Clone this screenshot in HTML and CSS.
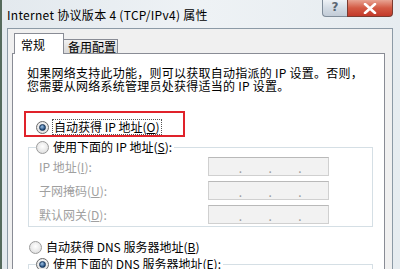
FILE: index.html
```html
<!DOCTYPE html>
<html lang="zh-CN">
<head>
<meta charset="utf-8">
<title>Internet 协议版本 4 (TCP/IPv4) 属性</title>
<link rel="stylesheet" href="styles.css">
</head>
<body>
<div class="window">
  <div class="titlebar">
    <span class="title">Internet 协议版本 4 (TCP/IPv4) 属性</span>
    <div class="caption-btns">
      <div class="btn-help">?</div>
      <div class="btn-close">
        <svg width="14" height="11" viewBox="0 0 14 11"><path d="M2 1 L12 10 M12 1 L2 10" stroke="#fff" stroke-width="2.6" stroke-linecap="round"/></svg>
      </div>
    </div>
  </div>
  <div class="client">
    <div class="tabs">
      <div class="tab active">常规</div>
      <div class="tab">备用配置</div>
    </div>
    <div class="panel">
      <p class="desc">如果网络支持此功能，则可以获取自动指派的 IP 设置。否则，<br>您需要从网络系统管理员处获得适当的 IP 设置。</p>
      <div class="highlight">
        <div class="radio-row"><span class="radio checked"></span><span class="focus">自动获得 IP 地址(<u>O</u>)</span></div>
      </div>
      <fieldset class="group">
        <legend><div class="radio-row"><span class="radio"></span><span>使用下面的 IP 地址(<u>S</u>):</span></div></legend>
        <div class="field-row"><span class="label">IP 地址(<u>I</u>):</span><div class="ipbox"><span></span><i>.</i><span></span><i>.</i><span></span><i>.</i><span></span></div></div>
        <div class="field-row"><span class="label">子网掩码(<u>U</u>):</span><div class="ipbox"><span></span><i>.</i><span></span><i>.</i><span></span><i>.</i><span></span></div></div>
        <div class="field-row"><span class="label">默认网关(<u>D</u>):</span><div class="ipbox"><span></span><i>.</i><span></span><i>.</i><span></span><i>.</i><span></span></div></div>
      </fieldset>
      <div class="radio-row dns-auto"><span class="radio"></span><span>自动获得 DNS 服务器地址(<u>B</u>)</span></div>
      <fieldset class="group group2">
        <legend><div class="radio-row"><span class="radio checked"></span><span>使用下面的 DNS 服务器地址(<u>E</u>):</span></div></legend>
      </fieldset>
    </div>
  </div>
</div>
</body>
</html>
```
FILE: styles.css
```css
html, body {
  margin: 0;
  padding: 0;
}
body {
  width: 400px;
  height: 269px;
  overflow: hidden;
  font-family: "Noto Sans CJK SC", "DejaVu Sans", sans-serif;
  font-size: 12px;
  color: #000;
}
.window {
  height: 269px;
  display: flex;
  flex-direction: column;
  background: linear-gradient(to right, #e3e9ee, #eef2f5 50%, #e6ecf0);
  border-left: 2px solid #556a5c;
  box-sizing: border-box;
  overflow: hidden;
}
.titlebar {
  height: 28px;
  flex: none;
  display: flex;
  align-items: flex-start;
  justify-content: space-between;
  padding-left: 5px;
  padding-right: 7px;
}
.title {
  margin-top: 7px;
  line-height: 16px;
  letter-spacing: 0.3px;
}
.caption-btns {
  display: flex;
}
.btn-help {
  width: 25px;
  height: 17px;
  box-sizing: border-box;
  border: 1px solid #7f8c99;
  border-top: none;
  border-right: none;
  border-bottom-left-radius: 4px;
  background: linear-gradient(#eef2f6, #d3dbe4 50%, #c2ccd7);
  color: #5b6672;
  font-family: "DejaVu Sans", sans-serif;
  font-size: 12px;
  font-weight: bold;
  line-height: 15px;
  text-align: center;
}
.btn-close {
  width: 46px;
  height: 17px;
  box-sizing: border-box;
  border: 1px solid #7a3b30;
  border-top: none;
  border-bottom-right-radius: 4px;
  background: linear-gradient(#e8a493, #d35a44 50%, #c2392a);
  display: flex;
  align-items: center;
  justify-content: center;
}
.client {
  flex: 1;
  min-height: 0;
  overflow: hidden;
  margin-left: 5px;
  margin-right: 7px;
  background: #f0f0f0;
  border-top: 1px solid #8c9aa6;
  border-left: 1px solid #8c9aa6;
  border-right: 1px solid #8c9aa6;
  padding-top: 3px;
  padding-left: 4px;
  padding-right: 7px;
}
.tabs {
  display: flex;
  align-items: flex-end;
  height: 21px;
  margin-left: 2px;
  position: relative;
  z-index: 1;
}
.tab {
  height: 13px;
  padding: 0 1px 0 4px;
  border: 1px solid #898c95;
  border-bottom: none;
  background: linear-gradient(#f2f2f2, #e3e3e3 50%, #d9d9d9);
  line-height: 14px;
  font-size: 12px;
}
.tab.active {
  height: 20px;
  padding: 0 18px 0 6px;
  background: #fff;
  line-height: 22px;
  margin-bottom: -1px;
  position: relative;
}
.tab.active + .tab {
  border-left: none;
}
.panel {
  background: #fff;
  border: 1px solid #898c95;
  border-bottom: none;
  padding-left: 14px;
  padding-right: 12px;
  padding-bottom: 10px;
}
.desc {
  margin: 12px 0 0;
  line-height: 13px;
  font-size: 12px;
  letter-spacing: 0.25px;
  white-space: nowrap;
}
.highlight {
  margin: 19px 0 0 -3px;
  width: 161px;
  height: 26px;
  box-sizing: border-box;
  border: 2px solid #e0222a;
  padding: 6px 0 0 10px;
}
.radio-row {
  display: flex;
  align-items: center;
  height: 16px;
  line-height: 14px;
  white-space: nowrap;
}
.radio {
  width: 11px;
  height: 11px;
  border-radius: 50%;
  border: 1px solid #9b9b9b;
  background: radial-gradient(circle at 50% 40%, #ffffff, #e4e4e4 70%, #cfcfcf);
  margin-right: 4px;
  flex: none;
  display: flex;
  align-items: center;
  justify-content: center;
}
.radio.checked {
  border-color: #6b6b6b;
}
.radio.checked::after {
  content: "";
  width: 5px;
  height: 5px;
  border-radius: 50%;
  background: radial-gradient(circle at 40% 35%, #9fc3e6, #214c7d 70%, #10304f);
  border: 1px solid #17365a;
}
.focus {
  outline: 1px dotted #555;
  outline-offset: 0;
  padding: 0 1px;
}
u {
  text-decoration: underline;
  text-underline-offset: 1px;
}
.group {
  margin: 2px 0 0 1px;
  width: 345px;
  box-sizing: border-box;
  border: 1px solid #d5dfe5;
  padding: 2px 0 2px 7px;
  min-width: 0;
}
.group legend {
  padding: 0 2px 0 0;
  margin: 0;
}
.field-row {
  display: flex;
  align-items: center;
  height: 19px;
  margin-bottom: 5px;
  padding-left: 3px;
  color: #a0a0a0;
}
.field-row:last-child {
  margin-bottom: 0;
}
.label {
  width: 169px;
  flex: none;
  white-space: nowrap;
}
.ipbox {
  width: 121px;
  height: 19px;
  box-sizing: border-box;
  border: 1px solid #d0d0d0;
  border-top-color: #b9b9b9;
  background: #f2f2f2;
  display: flex;
  align-items: flex-end;
  padding-left: 3px;
}
.ipbox span {
  width: 28px;
}
.ipbox i {
  font-style: normal;
  width: 3px;
  color: #9a9a9a;
  line-height: 14px;
  font-size: 12px;
}
.dns-auto {
  margin-top: 12px;
  margin-left: 2px;
}
.group2 {
  margin-top: 1px;
  height: 30px;
}
```
